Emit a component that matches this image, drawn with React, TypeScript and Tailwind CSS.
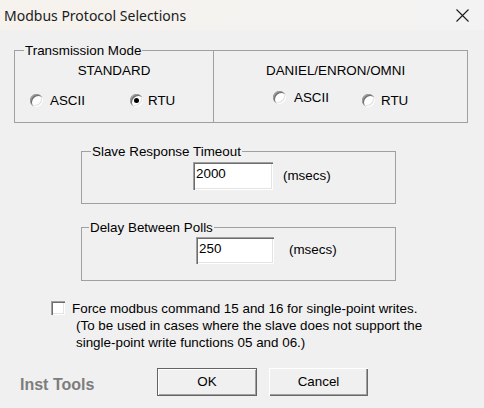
const Radio = ({ checked = false }: { checked?: boolean }) => (
	<div className="flex w-[13px] h-[13px] shrink-0 items-center justify-center rounded-full bg-white shadow-[inset_1px_1px_0_#a0a0a0,inset_2px_2px_0_#6d6d6d,inset_-1px_-1px_0_#ffffff,inset_-2px_-2px_0_#e3e3e3]">
		{checked && <div className="w-[5px] h-[5px] rounded-full bg-black" />}
	</div>
);

const Group = ({
	label,
	labelLeft,
	className,
	children,
}: {
	label: string;
	labelLeft: string;
	className: string;
	children: React.ReactNode;
}) => (
	<div className={`relative border border-[#a0a0a0] ${className}`}>
		<span
			className={`absolute -top-[8px] ${labelLeft} px-[1px] bg-[#f0f0f0] leading-[15px]`}
		>
			{label}
		</span>
		{children}
	</div>
);

const Field = ({ value, className }: { value: string; className: string }) => (
	<div
		className={`bg-white pl-[3px] pt-[4px] leading-[15px] shadow-[inset_1px_1px_0_#a0a0a0,inset_2px_2px_0_#6d6d6d,inset_-1px_-1px_0_#ffffff,inset_-2px_-2px_0_#e3e3e3] ${className}`}
	>
		{value}
	</div>
);

export default function App() {
	return (
		<div className="flex flex-col w-[484px] h-[408px] bg-[#f0f0f0] text-[13.4px] text-black font-['Liberation_Sans',Arial,sans-serif] overflow-hidden">
			{/* title bar */}
			<div className="flex h-[30px] shrink-0 items-center justify-between pl-[4px] pr-[15px] bg-gradient-to-r from-[#f6f2ed] to-[#f3f3f3]">
				<span className="text-[14px] text-[#1b1b1b] font-['Noto_Sans',sans-serif]">
					Modbus Protocol Selections
				</span>
				<svg width="13" height="13" viewBox="0 0 13 13">
					<path d="M0.5 0.5 L12.5 12.5 M12.5 0.5 L0.5 12.5" stroke="#1b1b1b" strokeWidth="1.1" />
				</svg>
			</div>

			{/* transmission mode */}
			<Group
				label="Transmission Mode"
				labelLeft="left-[9px]"
				className="flex mt-[20px] ml-[14px] w-[454px] h-[73px]"
			>
				<div className="flex flex-col items-center w-[199px] pt-[12px] border-r border-[#a0a0a0]">
					<span className="leading-[15px]">STANDARD</span>
					<div className="flex self-stretch mt-[15px] pl-[15px] leading-[15px]">
						<div className="flex w-[100px] items-center gap-[7px]">
							<Radio />
							<span>ASCII</span>
						</div>
						<div className="flex items-center gap-[5px]">
							<Radio checked />
							<span>RTU</span>
						</div>
					</div>
				</div>
				<div className="flex flex-col flex-1 pt-[12px] pl-[52px]">
					<span className="leading-[15px]">DANIEL/ENRON/OMNI</span>
					<div className="flex items-start mt-[12px] ml-[7px] leading-[15px]">
						<div className="flex w-[89px] items-center gap-[8px]">
							<Radio />
							<span>ASCII</span>
						</div>
						<div className="flex mt-[3px] items-center gap-[6px]">
							<Radio />
							<span>RTU</span>
						</div>
					</div>
				</div>
			</Group>

			{/* slave response timeout */}
			<Group
				label="Slave Response Timeout"
				labelLeft="left-[9px]"
				className="flex items-center mt-[28px] ml-[81px] w-[315px] h-[53px] pt-[10px] pb-[13px] pl-[111px]"
			>
				<Field value="2000" className="w-[80px] h-[28px]" />
				<span className="ml-[10px]">(msecs)</span>
			</Group>

			{/* delay between polls */}
			<Group
				label="Delay Between Polls"
				labelLeft="left-[7px]"
				className="flex items-center mt-[23px] ml-[81px] w-[315px] h-[54px] pt-[9px] pb-[16px] pl-[114px]"
			>
				<Field value="250" className="w-[78px] h-[27px]" />
				<span className="ml-[15px]">(msecs)</span>
			</Group>

			{/* force option */}
			<div className="flex items-start mt-[19px] ml-[51px]">
				<div className="w-[14px] h-[14px] mt-[1px] shrink-0 bg-white shadow-[inset_1px_1px_0_#a0a0a0,inset_2px_2px_0_#6d6d6d,inset_-1px_-1px_0_#ffffff,inset_-2px_-2px_0_#e3e3e3]" />
				<div className="flex flex-col ml-[7px] leading-[17px]">
					<span>Force modbus command 15 and 16 for single-point writes.</span>
					<span className="pl-[4px]">
						(To be used in cases where the slave does not support the
					</span>
					<span className="pl-[4px]">single-point write functions 05 and 06.)</span>
				</div>
			</div>

			{/* footer */}
			<div className="flex items-start mt-[17px] pl-[20px]">
				<span className="w-[137px] mt-[8px] text-[16px] font-bold leading-[18px] text-[#7d7d7d]">
					Inst Tools
				</span>
				<button className="w-[100px] h-[28px] bg-[#f0f0f0] border border-[#646464] shadow-[inset_1px_1px_0_#ffffff,inset_-1px_-1px_0_#a0a0a0]">
					OK
				</button>
				<button className="w-[99px] h-[28px] ml-[12px] bg-[#f0f0f0] shadow-[inset_1px_1px_0_#ffffff,inset_-1px_-1px_0_#696969,inset_-2px_-2px_0_#a0a0a0]">
					Cancel
				</button>
			</div>
		</div>
	);
}
